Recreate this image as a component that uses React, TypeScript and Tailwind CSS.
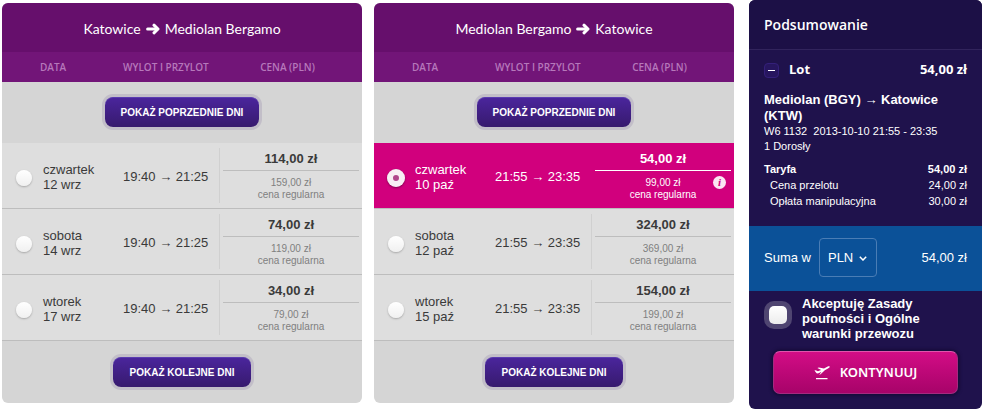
import { useState } from 'react';

type Flight = {
  day: string;
  date: string;
  departure: string;
  arrival: string;
  price: string;
  regular: string;
};

type FlightPanelProps = {
  id: string;
  from: string;
  to: string;
  flights: Flight[];
  initial: number | null;
};

const outbound: Flight[] = [
  { day: 'czwartek', date: '12 wrz', departure: '19:40', arrival: '21:25', price: '114,00 zł', regular: '159,00 zł' },
  { day: 'sobota', date: '14 wrz', departure: '19:40', arrival: '21:25', price: '74,00 zł', regular: '119,00 zł' },
  { day: 'wtorek', date: '17 wrz', departure: '19:40', arrival: '21:25', price: '34,00 zł', regular: '79,00 zł' },
];

const inbound: Flight[] = [
  { day: 'czwartek', date: '10 paź', departure: '21:55', arrival: '23:35', price: '54,00 zł', regular: '99,00 zł' },
  { day: 'sobota', date: '12 paź', departure: '21:55', arrival: '23:35', price: '324,00 zł', regular: '369,00 zł' },
  { day: 'wtorek', date: '15 paź', departure: '21:55', arrival: '23:35', price: '154,00 zł', regular: '199,00 zł' },
];

function RouteArrow() {
  return (
    <svg viewBox="0 0 14 12" className="h-3 w-3.5" fill="none" stroke="currentColor" strokeWidth="3" aria-hidden="true">
      <path d="M1.6 6H11" strokeLinecap="round" />
      <path d="M8 2.2 12 6 8 9.8" strokeLinecap="round" strokeLinejoin="round" />
    </svg>
  );
}

function DaysButton({ label }: { label: string }) {
  return (
    <button
      type="button"
      className="h-[30px] rounded-lg border-t border-[#5a3cb0] bg-linear-to-b from-[#4a259c] to-[#371a6e] px-4 text-[10px] font-bold text-white ring-3 ring-[#c2bec8]"
    >
      {label}
    </button>
  );
}

function FlightRow({ flight, group, selected, onSelect }: { flight: Flight; group: string; selected: boolean; onSelect: () => void }) {
  const id = `${group}-${flight.date.replace(' ', '-')}`;
  return (
    <tr className={`border-b border-[#bdbdbd] ${selected ? 'bg-[#d1007d] text-white' : 'bg-[#dedede] text-[#3a3a3a]'}`}>
      <td className="p-0">
        <input
          id={id}
          type="radio"
          name={group}
          checked={selected}
          onChange={onSelect}
          className="mt-1 ml-3.5 block size-4 appearance-none rounded-full bg-linear-to-b from-white to-[#f0f0f0] shadow-[0_1px_2px_rgba(0,0,0,0.25)] checked:ml-[13px] checked:size-[18px] checked:bg-none checked:bg-[#b0468c] checked:shadow-[inset_0_0_0_6px_#f8eef4,0_1px_2px_rgba(0,0,0,0.4)]"
        />
      </td>
      <td className="p-0 pt-0.5">
        <label htmlFor={id} className="block text-[13px] leading-[15px]">
          {flight.day}
          <br />
          {flight.date}
        </label>
      </td>
      <td className="p-0 pt-0.5 text-[13px] leading-5 whitespace-nowrap">
        {flight.departure} → {flight.arrival}
      </td>
      <td className="relative p-0 py-[5px]">
        <div className={`border-l px-[3px] text-center ${selected ? 'border-transparent' : 'border-[#d0d0d0]'}`}>
          <p className={`border-b text-[13px] leading-[22px] font-bold ${selected ? 'border-white' : 'border-[#bdbdbd]'}`}>{flight.price}</p>
          <p className={`pt-1.5 pb-0.5 text-[10px] leading-3 ${selected ? 'text-white' : 'text-[#808080]'}`}>
            {flight.regular}
            <br />
            cena regularna
          </p>
        </div>
        {selected && (
          <span className="absolute top-[33px] right-2 flex size-[13px] items-center justify-center rounded-full bg-[#fbe6f3] font-['Liberation_Serif',serif] text-[11px] leading-none font-bold text-[#d1007d] italic">
            i
          </span>
        )}
      </td>
    </tr>
  );
}

function FlightPanel({ id, from, to, flights, initial }: FlightPanelProps) {
  const [selected, setSelected] = useState<number | null>(initial);
  return (
    <section className="min-w-0 flex-1 overflow-hidden rounded-md bg-[#d5d5d5]">
      <h2 className="flex h-[49px] items-center justify-center gap-[5px] bg-[#660f6c] pt-0.5 font-['Lato',sans-serif] text-sm text-white">
        {from}
        <RouteArrow />
        {to}
      </h2>
      <table className="w-full table-fixed border-collapse">
        <colgroup>
          <col className="w-[41px]" />
          <col className="w-20" />
          <col className="w-24" />
          <col />
        </colgroup>
        <thead className="bg-[#721578] text-left font-['Open_Sans',sans-serif] text-[10px] text-[#b678bb]">
          <tr className="h-[30px]">
            <th colSpan={2} className="p-0 pl-[38px] font-semibold">DATA</th>
            <th className="p-0 font-semibold whitespace-nowrap">WYLOT I PRZYLOT</th>
            <th className="p-0 pr-1.5 text-center font-semibold">CENA (PLN)</th>
          </tr>
        </thead>
        <tbody>
          <tr className="h-[61px]">
            <td colSpan={4} className="p-0 pb-0.5 text-center">
              <DaysButton label="POKAŻ POPRZEDNIE DNI" />
            </td>
          </tr>
          {flights.map((flight, i) => (
            <FlightRow key={flight.date} flight={flight} group={id} selected={selected === i} onSelect={() => setSelected(i)} />
          ))}
          <tr className="h-[62px]">
            <td colSpan={4} className="p-0 text-center">
              <DaysButton label="POKAŻ KOLEJNE DNI" />
            </td>
          </tr>
        </tbody>
      </table>
    </section>
  );
}

function PlaneIcon() {
  return (
    <svg viewBox="0 0 16 15" className="h-[15px] w-4" fill="currentColor" aria-hidden="true">
      <path d="M.4 5.6 1.6 5.2 4 6.3 7.2 4.9 3.4 3 4.9 2.4 10 3.6 13.3 1.7C14.4 1.1 15.4 1.1 15.7 1.6 15.9 2.2 15.3 2.8 14.4 3.3L10.8 5.3 6.6 9.3 5.2 9.8 7.6 6.8 3.9 8.5 2.6 8.2z" />
      <path d="M2 13h11.5v1.2H2z" />
    </svg>
  );
}

function Summary() {
  return (
    <aside className="ml-[15px] w-[233px] shrink-0 overflow-hidden rounded-md bg-[#1f124c] text-white">
      <h2 className="h-[50px] border-b border-[#31245c] bg-[#1c1046] px-[15px] font-['Open_Sans',sans-serif] text-sm leading-[49px] font-semibold">
        Podsumowanie
      </h2>
      <div className="h-44 px-[15px] pt-2.5 text-[11px]">
        <div className="flex h-5 items-center font-['Open_Sans',sans-serif] text-[13px] font-bold">
          <button
            type="button"
            aria-label="Zwiń"
            className="flex size-[15px] items-center justify-center rounded-sm border border-[#34207a] bg-[#27165f]"
          >
            <span className="h-px w-[7px] bg-white" />
          </button>
          <span className="ml-2.5">Lot</span>
          <span className="ml-auto">54,00 zł</span>
        </div>
        <h3 className="mt-3 text-[13px] leading-4 font-bold">Mediolan (BGY) → Katowice (KTW)</h3>
        <p className="leading-[15px] whitespace-pre">W6 1132  2013-10-10 21:55 - 23:35</p>
        <p className="leading-[15px]">1 Dorosły</p>
        <dl className="mt-[7px] leading-4">
          <div className="flex justify-between font-bold">
            <dt>Taryfa</dt>
            <dd>54,00 zł</dd>
          </div>
          <div className="flex justify-between">
            <dt className="pl-1.5">Cena przelotu</dt>
            <dd>24,00 zł</dd>
          </div>
          <div className="flex justify-between">
            <dt className="pl-1.5">Opłata manipulacyjna</dt>
            <dd>30,00 zł</dd>
          </div>
        </dl>
      </div>
      <div className="flex h-[65px] items-center bg-[#0b5198] px-[15px] pb-0.5 text-[13px]">
        <label htmlFor="currency">Suma w</label>
        <div className="relative ml-2">
          <select
            id="currency"
            defaultValue="PLN"
            className="block h-[39px] w-[58px] appearance-none rounded-sm border border-[#4a7db5] bg-transparent pl-2 text-[13px] text-white"
          >
            <option>PLN</option>
            <option>EUR</option>
          </select>
          <svg viewBox="0 0 8 5" className="pointer-events-none absolute top-[18px] right-2.5 h-[5px] w-2" fill="none" stroke="white" strokeWidth="1.5" aria-hidden="true">
            <path d="M.8.8 4 4 7.2.8" />
          </svg>
        </div>
        <span className="ml-auto">54,00 zł</span>
      </div>
      <div className="px-[15px] pt-[5px] pb-[15px]">
        <div className="flex gap-2.5">
          <input
            id="terms"
            type="checkbox"
            className="mt-2.5 ml-[5px] block size-[18px] shrink-0 appearance-none rounded-[5px] bg-linear-to-b from-white to-[#ececec] ring-5 ring-[#4f4571] checked:from-[#d1007d] checked:to-[#d1007d]"
          />
          <label htmlFor="terms" className="ml-[5px] w-[140px] text-[13px] leading-[15px] font-bold">
            Akceptuję Zasady poufności i Ogólne warunki przewozu
          </label>
        </div>
        <button
          type="button"
          className="mx-[9px] mt-2.5 flex h-[43px] w-[185px] items-center justify-center gap-2.5 rounded-[7px] border border-[#a52a80] border-t-[#df55ab] bg-linear-to-b from-[#d30d86] to-[#a70369] font-['Noto_Sans',sans-serif] text-[13px] font-semibold shadow-[0_0_3px_2px_#170c3b]"
        >
          <PlaneIcon />
          KONTYNUUJ
        </button>
      </div>
    </aside>
  );
}

export default function App() {
  return (
    <main className="flex items-start bg-white pr-2 pl-0.5 font-['Liberation_Sans',Arial,sans-serif]">
      <div className="flex min-w-0 flex-1 gap-3 pt-[3px]">
        <FlightPanel id="outbound" from="Katowice" to="Mediolan Bergamo" flights={outbound} initial={null} />
        <FlightPanel id="inbound" from="Mediolan Bergamo" to="Katowice" flights={inbound} initial={0} />
      </div>
      <Summary />
    </main>
  );
}
